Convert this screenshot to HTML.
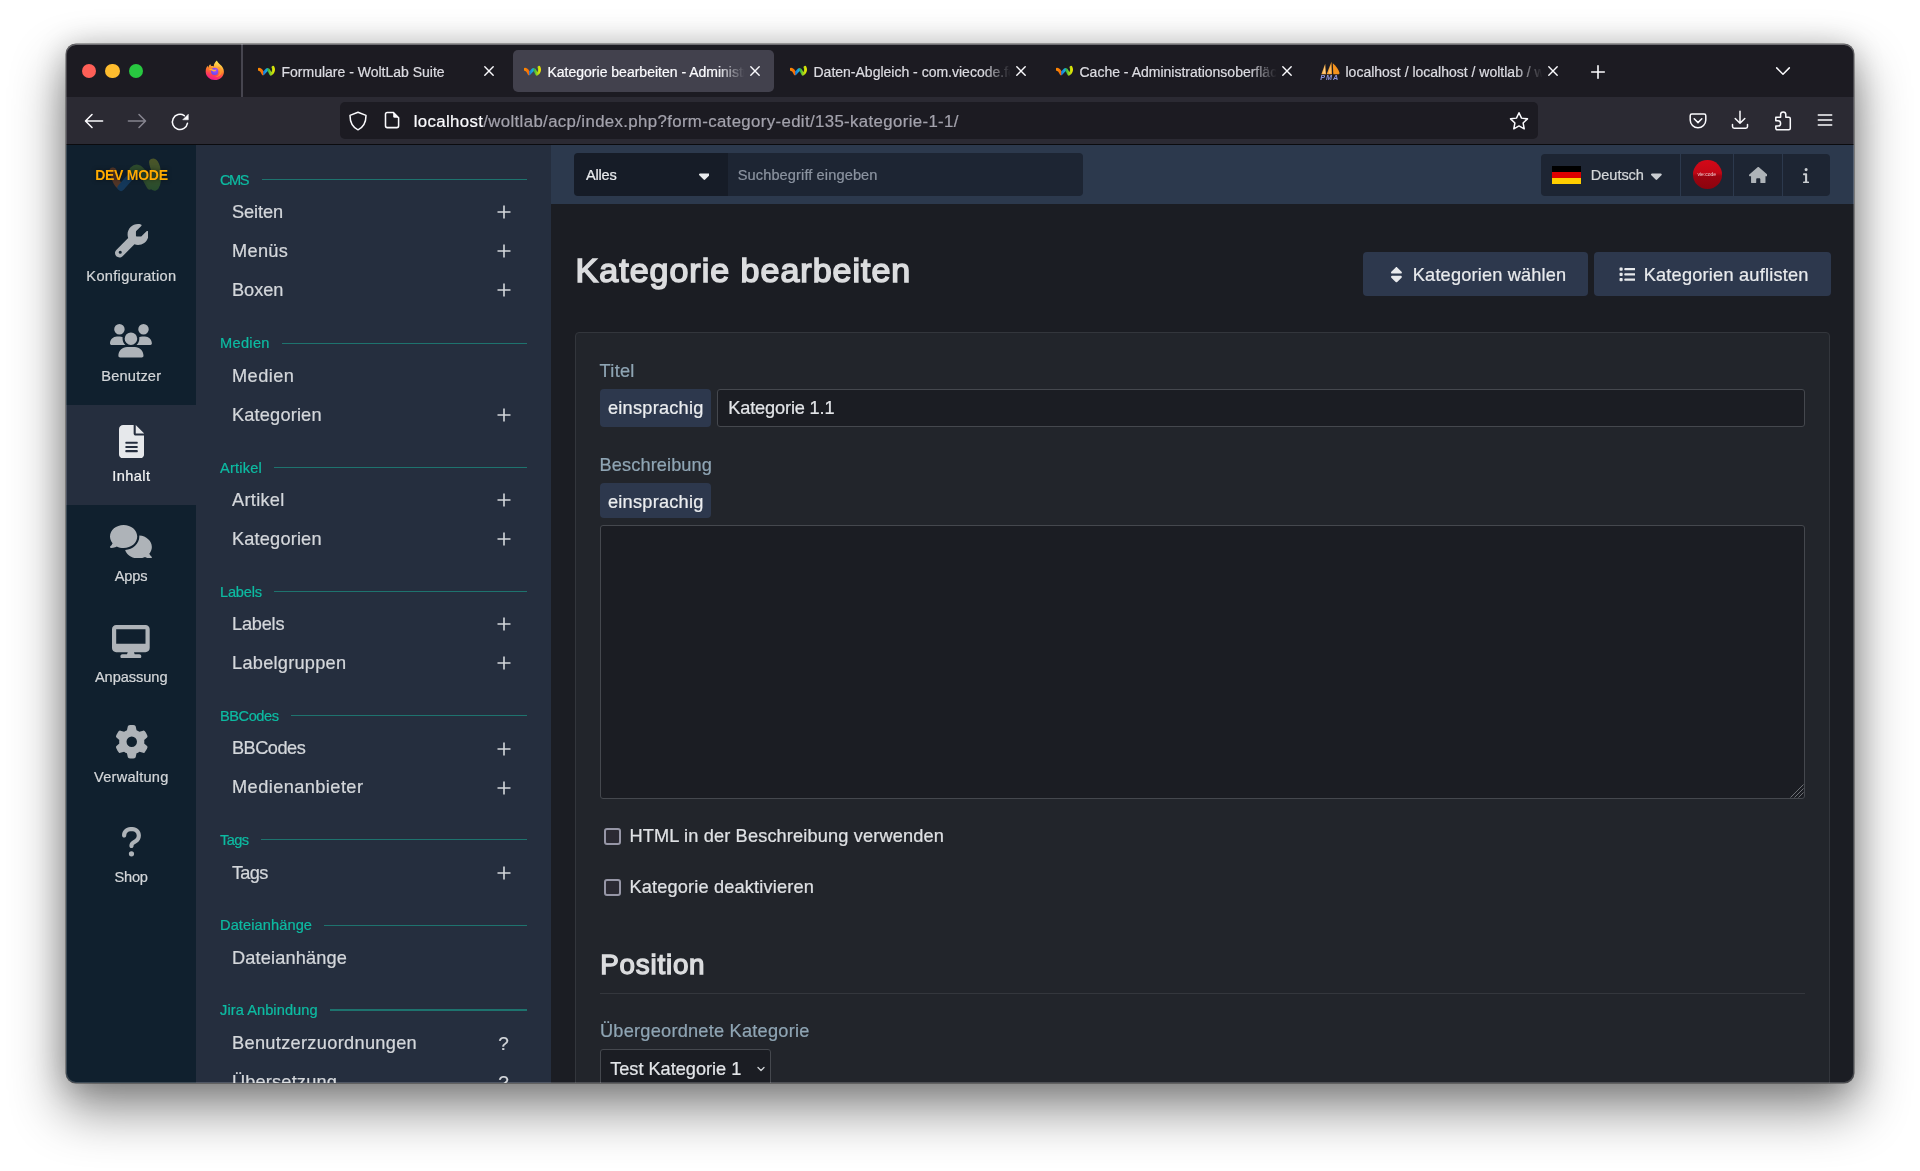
<!DOCTYPE html>
<html lang="de"><head><meta charset="utf-8"><title>Kategorie bearbeiten - Administrationsoberfläche</title>
<style>
html,body{margin:0;padding:0;background:#fff}
body{width:1920px;height:1171px;position:relative;overflow:hidden;font-family:"Liberation Sans",sans-serif}
.b{position:absolute;display:block}
.t{position:absolute;white-space:nowrap;font-family:"Liberation Sans",sans-serif;-webkit-text-stroke:0.22px}
#shadow{position:absolute;left:66px;top:44px;width:1788px;height:1039px;border-radius:10px;box-shadow:0 0 0 0.5px rgba(0,0,0,.6),0 25px 52px 3px rgba(0,0,0,.44),0 3px 30px rgba(0,0,0,.22)}
#win{position:absolute;left:66px;top:44px;width:1788px;height:1039px;border-radius:10px;overflow:hidden;background:#1c1b22}
#page{position:absolute;left:-66px;top:-44px;width:1920px;height:1171px;transform:translateZ(0);will-change:transform}
#rim{position:absolute;left:66px;top:44px;width:1788px;height:1039px;border-radius:10px;box-shadow:inset 0 0 0 1px rgba(255,255,255,.2),inset 0 1px 0 rgba(255,255,255,.22);pointer-events:none}
</style></head><body>
<div id="shadow"></div>
<div id="win"><div id="page">
<div class="b" style="left:66px;top:44px;width:1788px;height:53px;background:#1c1b22;"></div>
<div class="b" style="left:66px;top:97px;width:1788px;height:47px;background:#2b2a33;"></div>
<div class="b" style="left:66px;top:144px;width:1788px;height:1px;background:#0b0b0e;"></div>
<div class="b" style="left:81.5px;top:63.7px;width:14.6px;height:14.6px;background:#fe5f57;border-radius:7.3px;"></div>
<div class="b" style="left:105px;top:63.7px;width:14.6px;height:14.6px;background:#febc2e;border-radius:7.3px;"></div>
<div class="b" style="left:128.7px;top:63.7px;width:14.6px;height:14.6px;background:#28c840;border-radius:7.3px;"></div>
<div class="b" style="left:241.3px;top:44px;width:1.4px;height:53px;background:#46454f;"></div>
<svg class="b" style="left:205.4px;top:60.2px;" width="19.4" height="20.4" viewBox="0 0 20 21"><defs><linearGradient id="fx1" x1="0.65" y1="0" x2="0.35" y2="1"><stop offset="0" stop-color="#fff35a"/><stop offset="0.28" stop-color="#ffb83b"/><stop offset="0.52" stop-color="#ff7a2a"/><stop offset="0.74" stop-color="#ff3f55"/><stop offset="1" stop-color="#ee1690"/></linearGradient><radialGradient id="fx2" cx="0.6" cy="0.35" r="0.7"><stop offset="0" stop-color="#b04cff"/><stop offset="1" stop-color="#5b4bf0"/></radialGradient></defs>
<path d="M12.300 0.600C12.900 2.600 14.300 3.600 15.800 5C17.800 6.800 19.500 8.800 19.500 12C19.500 16.800 15.300 20.600 10.100 20.600C4.900 20.600 0.700 16.800 0.700 11.800C0.700 9.200 1.700 7.300 2.700 6C2.800 6.900 3.100 7.500 3.500 8C3.700 6 4.600 4.800 5.600 4.300C5.600 5.100 5.900 5.700 6.500 6.300C7.500 6.200 8.300 6.300 9 6.600C9 4.600 10.300 2.200 12.300 0.600Z" fill="url(#fx1)"/>
<circle cx="10" cy="11.800" r="3.700" fill="url(#fx2)"/>
<path d="M4 9.800C5.500 9.100 7.300 9.200 8.500 9.900C9.600 10.500 10.700 10.300 11.700 9.500C11.600 11 10.300 12 8.900 11.800C7.300 11.600 6.700 10.300 4 9.800Z" fill="#ffb23a"/>
<path d="M12.600 7.500C14.600 8.600 15.600 10.600 15.300 12.800C15 15.200 13 17 10.500 17.200C13.800 17.800 16.900 15.600 17.300 12.300C17.500 10.300 16.500 8.400 14.800 7.300C14 6.800 13.200 6.900 12.600 7.500Z" fill="#ff9a2e" opacity="0.9"/></svg>
<svg class="b" style="left:257.75px;top:65.4px;opacity:1;" width="17.5" height="11" viewBox="0 0 17.5 11"><defs><linearGradient id="wlt0" gradientUnits="userSpaceOnUse" x1="0.5" x2="16.5" y1="0" y2="0"><stop offset="0" stop-color="#ff8a00"/><stop offset="0.27" stop-color="#f36b0a"/><stop offset="0.32" stop-color="#1878d8"/><stop offset="0.50" stop-color="#19a8e0"/><stop offset="0.62" stop-color="#34b848"/><stop offset="0.78" stop-color="#9ad21a"/><stop offset="1" stop-color="#f2ea00"/></linearGradient></defs>
<path d="M1 4.300C3 4.600 4.200 6.500 5.200 8.800L8.800 4.800C9.600 4.100 10.300 4.500 10.800 5.400L12.900 9.200C14.800 8.600 16.300 5.200 15 2.300" fill="none" stroke="url(#wlt0)" stroke-width="2.900" stroke-linecap="round" stroke-linejoin="round"/></svg>
<div class="t" style="left:281.5px;top:61.95px;width:197.600px;overflow:hidden;font-size:14px;line-height:20px;color:#dcdce2;letter-spacing:0px">Formulare - WoltLab Suite</div>
<svg class="b" style="left:483.4px;top:64.8px;" width="12" height="12" viewBox="-6 -6 12 12"><path d="M-4.200 -4.200L4.200 4.200M4.200 -4.200L-4.200 4.200" stroke="#fbfbfe" stroke-width="1.400" stroke-linecap="round"/></svg>
<div class="b" style="left:513px;top:50px;width:261.2px;height:42px;background:#42414d;border-radius:5px;"></div>
<svg class="b" style="left:523.75px;top:65.4px;opacity:1;" width="17.5" height="11" viewBox="0 0 17.5 11"><defs><linearGradient id="wlt1" gradientUnits="userSpaceOnUse" x1="0.5" x2="16.5" y1="0" y2="0"><stop offset="0" stop-color="#ff8a00"/><stop offset="0.27" stop-color="#f36b0a"/><stop offset="0.32" stop-color="#1878d8"/><stop offset="0.50" stop-color="#19a8e0"/><stop offset="0.62" stop-color="#34b848"/><stop offset="0.78" stop-color="#9ad21a"/><stop offset="1" stop-color="#f2ea00"/></linearGradient></defs>
<path d="M1 4.300C3 4.600 4.200 6.500 5.200 8.800L8.800 4.800C9.600 4.100 10.300 4.500 10.800 5.400L12.900 9.200C14.800 8.600 16.300 5.200 15 2.300" fill="none" stroke="url(#wlt1)" stroke-width="2.900" stroke-linecap="round" stroke-linejoin="round"/></svg>
<div class="t" style="left:547.5px;top:61.95px;width:197.600px;overflow:hidden;font-size:14px;line-height:20px;color:#fbfbfe;letter-spacing:0px">Kategorie bearbeiten - Administrationsoberfläche</div>
<div class="b" style="left:717px;top:60px;width:30px;height:22px;background:linear-gradient(90deg,rgba(66,65,77,0),rgba(66,65,77,1) 92%)"></div>
<svg class="b" style="left:749.4px;top:64.8px;" width="12" height="12" viewBox="-6 -6 12 12"><path d="M-4.200 -4.200L4.200 4.200M4.200 -4.200L-4.200 4.200" stroke="#fbfbfe" stroke-width="1.400" stroke-linecap="round"/></svg>
<svg class="b" style="left:789.75px;top:65.4px;opacity:1;" width="17.5" height="11" viewBox="0 0 17.5 11"><defs><linearGradient id="wlt2" gradientUnits="userSpaceOnUse" x1="0.5" x2="16.5" y1="0" y2="0"><stop offset="0" stop-color="#ff8a00"/><stop offset="0.27" stop-color="#f36b0a"/><stop offset="0.32" stop-color="#1878d8"/><stop offset="0.50" stop-color="#19a8e0"/><stop offset="0.62" stop-color="#34b848"/><stop offset="0.78" stop-color="#9ad21a"/><stop offset="1" stop-color="#f2ea00"/></linearGradient></defs>
<path d="M1 4.300C3 4.600 4.200 6.500 5.200 8.800L8.800 4.800C9.600 4.100 10.300 4.500 10.800 5.400L12.900 9.200C14.800 8.600 16.300 5.200 15 2.300" fill="none" stroke="url(#wlt2)" stroke-width="2.900" stroke-linecap="round" stroke-linejoin="round"/></svg>
<div class="t" style="left:813.5px;top:61.95px;width:197.600px;overflow:hidden;font-size:14px;line-height:20px;color:#dcdce2;letter-spacing:0px">Daten-Abgleich - com.viecode.forum</div>
<div class="b" style="left:983px;top:60px;width:30px;height:22px;background:linear-gradient(90deg,rgba(28,27,34,0),rgba(28,27,34,1) 92%)"></div>
<svg class="b" style="left:1015.4px;top:64.8px;" width="12" height="12" viewBox="-6 -6 12 12"><path d="M-4.200 -4.200L4.200 4.200M4.200 -4.200L-4.200 4.200" stroke="#fbfbfe" stroke-width="1.400" stroke-linecap="round"/></svg>
<svg class="b" style="left:1055.75px;top:65.4px;opacity:1;" width="17.5" height="11" viewBox="0 0 17.5 11"><defs><linearGradient id="wlt3" gradientUnits="userSpaceOnUse" x1="0.5" x2="16.5" y1="0" y2="0"><stop offset="0" stop-color="#ff8a00"/><stop offset="0.27" stop-color="#f36b0a"/><stop offset="0.32" stop-color="#1878d8"/><stop offset="0.50" stop-color="#19a8e0"/><stop offset="0.62" stop-color="#34b848"/><stop offset="0.78" stop-color="#9ad21a"/><stop offset="1" stop-color="#f2ea00"/></linearGradient></defs>
<path d="M1 4.300C3 4.600 4.200 6.500 5.200 8.800L8.800 4.800C9.600 4.100 10.300 4.500 10.800 5.400L12.900 9.200C14.800 8.600 16.300 5.200 15 2.300" fill="none" stroke="url(#wlt3)" stroke-width="2.900" stroke-linecap="round" stroke-linejoin="round"/></svg>
<div class="t" style="left:1079.5px;top:61.95px;width:197.600px;overflow:hidden;font-size:14px;line-height:20px;color:#dcdce2;letter-spacing:0px">Cache - Administrationsoberfläche</div>
<div class="b" style="left:1249px;top:60px;width:30px;height:22px;background:linear-gradient(90deg,rgba(28,27,34,0),rgba(28,27,34,1) 92%)"></div>
<svg class="b" style="left:1281.4px;top:64.8px;" width="12" height="12" viewBox="-6 -6 12 12"><path d="M-4.200 -4.200L4.200 4.200M4.200 -4.200L-4.200 4.200" stroke="#fbfbfe" stroke-width="1.400" stroke-linecap="round"/></svg>
<svg class="b" style="left:1318px;top:60px" width="24" height="22" viewBox="1318 60 24 22"><path d="M1325.200 63.800L1326 74.300H1321.400Z" fill="#f9b14a"/><path d="M1331.500 61.800L1332 74.300H1326.600Z" fill="#f7a02c"/><path d="M1332.800 63.200C1336.300 66 1338.600 69.500 1339.600 73L1339 74.300H1333.300Z" fill="#f5921c"/><path d="M1324.800 66L1325.200 73.500H1323Z" fill="#fde0ae" opacity="0.6"/><path d="M1330.600 65L1331 73.500H1328.500Z" fill="#fde0ae" opacity="0.5"/></svg>
<div class="t" style="left:1320.300px;top:73.600px;font-size:7.200px;line-height:7px;color:#8f96dc;font-weight:bold;font-style:italic;letter-spacing:0.900px;-webkit-text-stroke:0">PMA</div>
<div class="t" style="left:1345.5px;top:61.95px;width:197.600px;overflow:hidden;font-size:14px;line-height:20px;color:#dcdce2;letter-spacing:0px">localhost / localhost / woltlab / wcf1_category | phpMyAdmin</div>
<div class="b" style="left:1515px;top:60px;width:30px;height:22px;background:linear-gradient(90deg,rgba(28,27,34,0),rgba(28,27,34,1) 92%)"></div>
<svg class="b" style="left:1547.4px;top:64.8px;" width="12" height="12" viewBox="-6 -6 12 12"><path d="M-4.200 -4.200L4.200 4.200M4.200 -4.200L-4.200 4.200" stroke="#fbfbfe" stroke-width="1.400" stroke-linecap="round"/></svg>
<svg class="b" style="left:1590px;top:63.5px;" width="16" height="16" viewBox="-8 -8 16 16"><path d="M-6.300 0H6.300M0 -6.300V6.300" stroke="#fbfbfe" stroke-width="1.600" stroke-linecap="round"/></svg>
<svg class="b" style="left:1773.8px;top:64.5px;" width="18" height="12" viewBox="-9 -6 18 12"><path d="M-6.300 -3.100L0 3.200L6.300 -3.100" fill="none" stroke="#fbfbfe" stroke-width="1.500" stroke-linecap="round" stroke-linejoin="round"/></svg>
<svg class="b" style="left:83.3px;top:112px;" width="22" height="18" viewBox="-11 -9 22 18"><path d="M8.600 0H-8.200M-2 -6.500L-8.500 0L-2 6.500" fill="none" stroke="#fbfbfe" stroke-width="1.550" stroke-linecap="round" stroke-linejoin="round"/></svg>
<svg class="b" style="left:126.4px;top:112px;" width="22" height="18" viewBox="-11 -9 22 18"><path d="M-8.600 0H8.200M2 -6.500L8.500 0L2 6.500" fill="none" stroke="#85848f" stroke-width="1.550" stroke-linecap="round" stroke-linejoin="round"/></svg>
<svg class="b" style="left:168.7px;top:110.5px;" width="22" height="22" viewBox="-11 -11 22 22"><path d="M7.500 1.200A7.600 7.600 0 1 1 4.300 -6.300" fill="none" stroke="#fbfbfe" stroke-width="1.550" stroke-linecap="round"/><path d="M8.300 -7.800V-2.200H2.700z" fill="#fbfbfe" stroke="#fbfbfe" stroke-width="0.500" stroke-linejoin="round"/></svg>
<div class="b" style="left:339.7px;top:101.7px;width:1198.3px;height:37.5px;background:#1c1b22;border-radius:5px;"></div>
<svg class="b" style="left:347.2px;top:109.5px;" width="22" height="22" viewBox="-11 -11 22 22"><path d="M0 -8.800L8 -5.600C8 1.500 5 6.300 0 8.800C-5 6.300 -8 1.500 -8 -5.600Z" fill="none" stroke="#fbfbfe" stroke-width="1.500" stroke-linejoin="round"/></svg>
<svg class="b" style="left:381.5px;top:110.4px;" width="20" height="20" viewBox="-10 -10 20 20"><path d="M-4.700 -7.600H1.200L6.600 -2.200V5.800A1.800 1.800 0 0 1 4.800 7.600H-4.700A1.800 1.800 0 0 1 -6.500 5.800V-5.800A1.800 1.800 0 0 1 -4.700 -7.600Z" fill="none" stroke="#fbfbfe" stroke-width="1.550" stroke-linejoin="round"/><path d="M1.200 -7.600V-3.700A1.500 1.500 0 0 0 2.700 -2.200H6.600Z" fill="#fbfbfe"/></svg>
<div class="t" style="left:413.7px;top:110.98px;font-size:16.8px;line-height:22px;color:#a3a2ac;letter-spacing:0.37px"><span style="color:#fbfbfe">localhost</span>/woltlab/acp/index.php?form-category-edit/135-kategorie-1-1/</div>
<svg class="b" style="left:1508px;top:109.6px;" width="22" height="22" viewBox="-11 -11 22 22"><path d="M0.00 -8.30L2.53 -2.88L8.46 -2.15L4.09 1.93L5.23 7.80L0.00 4.90L-5.23 7.80L-4.09 1.93L-8.46 -2.15L-2.53 -2.88Z" fill="none" stroke="#fbfbfe" stroke-width="1.500" stroke-linejoin="round"/></svg>
<svg class="b" style="left:1686.6px;top:111px;" width="22" height="20" viewBox="-11 -10 22 20"><path d="M-6.100 -7H6.100A1.700 1.700 0 0 1 7.800 -5.300V-1.100A7.800 7.800 0 0 1 -7.800 -1.100V-5.300A1.700 1.700 0 0 1 -6.100 -7Z" fill="none" stroke="#fbfbfe" stroke-width="1.500" stroke-linejoin="round"/><path d="M-3.800 -2.200L0 1.600L3.800 -2.200" fill="none" stroke="#fbfbfe" stroke-width="1.500" stroke-linecap="round" stroke-linejoin="round"/></svg>
<svg class="b" style="left:1728.8px;top:109.2px;" width="22" height="22" viewBox="-11 -11 22 22"><path d="M0 -8.800V3.300M-4.800 -1.500L0 3.300L4.800 -1.500" fill="none" stroke="#fbfbfe" stroke-width="1.500" stroke-linecap="round" stroke-linejoin="round"/><path d="M-7.500 4.500V6.600A1.700 1.700 0 0 0 -5.800 8.300H5.800A1.700 1.700 0 0 0 7.500 6.600V4.500" fill="none" stroke="#fbfbfe" stroke-width="1.500" stroke-linecap="round"/></svg>
<svg class="b" style="left:1772.3px;top:109.6px;" width="22" height="22" viewBox="-11 -11 22 22"><path d="M-7.200 -3.800H-2.400V-6.400A2.600 2.600 0 0 1 2.800 -6.400V-3.800H5.800A1.500 1.500 0 0 1 7.300 -2.300V7.300A1.500 1.500 0 0 1 5.800 8.800H-5.700A1.500 1.500 0 0 1 -7.200 7.300V5H-5A2.600 2.600 0 0 0 -5 -0.200H-7.200Z" fill="none" stroke="#fbfbfe" stroke-width="1.500" stroke-linejoin="round"/></svg>
<svg class="b" style="left:1815.3px;top:112.3px;" width="20" height="16" viewBox="-10 -8 20 16"><path d="M-6.700 -5.100H6.700M-6.700 0H6.700M-6.700 5.100H6.700" stroke="#fbfbfe" stroke-width="1.500" stroke-linecap="round"/></svg>
<div class="b" style="left:66px;top:145px;width:130px;height:938px;background:#10202e;"></div>
<div class="b" style="left:196px;top:145px;width:355px;height:938px;background:#252e3e;"></div>
<div class="b" style="left:551px;top:145px;width:1303px;height:938px;background:#1b1d23;"></div>
<div class="b" style="left:551px;top:145px;width:1303px;height:59.3px;background:#2c394d;"></div>
<svg class="b" style="left:100px;top:150px;opacity:0.36" width="70" height="50" viewBox="100 150 70 50"><defs><linearGradient id="lg1" x1="0" y1="0" x2="0" y2="1"><stop offset="0" stop-color="#b5b520"/><stop offset="1" stop-color="#4f9a2e"/></linearGradient></defs><path d="M113 171Q116.500 186.500 121.500 186" fill="none" stroke="#c45a1c" stroke-width="7" stroke-linecap="round"/><path d="M121 187.500L136.500 170" fill="none" stroke="#1c63a8" stroke-width="7" stroke-linecap="round"/><path d="M133 170Q138 165 143 173L150 186" fill="none" stroke="#5e922a" stroke-width="7" stroke-linecap="round"/><path d="M146 181Q150 192 156 190.500Q161.500 188 161 175Q160.500 160 153.500 158.500Q147.500 158.500 149.500 165Q152 171 152 178Z" fill="url(#lg1)"/></svg>
<div class="t" style="left:95.2px;top:166.25px;font-size:14px;line-height:18px;color:#ffab00;letter-spacing:-0.27px;font-weight:bold;-webkit-text-stroke:0;text-shadow:0 0 4px rgba(0,0,0,.55);">DEV MODE</div>
<svg class="b" style="left:114.55px;top:224.15px;" width="33.5" height="33.5" viewBox="0 0 512 512"><path fill="#aeb3b8" d="M352 320c88.400 0 160-71.600 160-160c0-15.300-2.200-30.100-6.200-44.200c-3.100-10.800-16.400-13.200-24.300-5.300l-76.800 76.800c-3 3-7.100 4.700-11.300 4.700H336c-8.800 0-16-7.200-16-16V118.600c0-4.200 1.700-8.300 4.700-11.300l76.800-76.800c7.900-7.900 5.400-21.200-5.300-24.300C382.100 2.200 367.300 0 352 0C263.600 0 192 71.600 192 160c0 19.100 3.400 37.500 9.500 54.500L19.900 396.100C7.200 408.800 0 426.100 0 444.100C0 481.600 30.400 512 67.900 512c18 0 35.300-7.200 48-19.900L297.500 310.500c17 6.200 35.400 9.500 54.500 9.500zM80 408a24 24 0 1 1 0 48 24 24 0 1 1 0-48z"/></svg>
<div class="t" style="left:86.35px;top:266.84px;font-size:14.6px;line-height:19px;color:#d3d6d9;letter-spacing:0.31px;">Konfiguration</div>
<svg class="b" style="left:110.36px;top:324.35px;" width="41.88" height="33.5" viewBox="0 0 640 512"><path fill="#aeb3b8" d="M144 0a80 80 0 1 1 0 160A80 80 0 1 1 144 0zM512 0a80 80 0 1 1 0 160A80 80 0 1 1 512 0zM0 298.700C0 239.800 47.800 192 106.700 192h42.700c15.900 0 31 3.500 44.600 9.700c-1.300 7.200-1.900 14.700-1.900 22.300c0 38.200 16.800 72.500 43.300 96c-.2 0-.4 0-.7 0H21.300C9.600 320 0 310.400 0 298.700zM405.300 320c-.2 0-.4 0-.7 0c26.600-23.500 43.300-57.800 43.300-96c0-7.600-.7-15-1.900-22.300c13.600-6.300 28.700-9.700 44.600-9.700h42.700C592.200 192 640 239.800 640 298.700c0 11.800-9.600 21.300-21.300 21.300H405.300zM224 224a96 96 0 1 1 192 0 96 96 0 1 1 -192 0zM128 485.300C128 411.700 187.700 352 261.300 352H378.700C452.300 352 512 411.700 512 485.300c0 14.700-11.900 26.700-26.700 26.700H154.700c-14.700 0-26.700-11.900-26.700-26.700z"/></svg>
<div class="t" style="left:101.36px;top:367.04px;font-size:14.6px;line-height:19px;color:#d3d6d9;letter-spacing:0.18px;">Benutzer</div>
<div class="b" style="left:66px;top:405px;width:130px;height:100.3px;background:#252e3e;"></div>
<svg class="b" style="left:118.74px;top:424.55px;" width="25.12" height="33.5" viewBox="0 0 384 512"><path fill="#e6e8eb" d="M64 0C28.700 0 0 28.700 0 64V448c0 35.300 28.700 64 64 64H320c35.300 0 64-28.700 64-64V160H256c-17.700 0-32-14.300-32-32V0H64zM256 0V128H384L256 0zM112 256H272c8.800 0 16 7.200 16 16s-7.200 16-16 16H112c-8.800 0-16-7.200-16-16s7.200-16 16-16zm0 64H272c8.800 0 16 7.200 16 16s-7.200 16-16 16H112c-8.800 0-16-7.200-16-16s7.200-16 16-16zm0 64H272c8.800 0 16 7.200 16 16s-7.200 16-16 16H112c-8.800 0-16-7.200-16-16s7.200-16 16-16z"/></svg>
<div class="t" style="left:112.36px;top:467.24px;font-size:14.6px;line-height:19px;color:#f2f3f4;letter-spacing:0.39px;">Inhalt</div>
<svg class="b" style="left:110.36px;top:524.75px;" width="41.88" height="33.5" viewBox="0 0 640 512"><path fill="#aeb3b8" d="M208 352c114.900 0 208-78.800 208-176S322.900 0 208 0S0 78.800 0 176c0 38.600 14.700 74.300 39.600 103.400c-3.500 9.400-8.700 17.700-14.200 24.700c-4.800 6.200-9.700 11-13.300 14.300c-1.800 1.600-3.300 2.900-4.300 3.700c-.5 .4-.9 .7-1.100 .8l-.2 .2C1 327.200-1.400 334.400 .8 340.900S9.100 352 16 352c21.800 0 43.800-5.600 62.100-12.500c9.200-3.500 17.800-7.400 25.300-11.400C134.100 343.300 169.800 352 208 352zM448 176c0 112.300-99.100 196.900-216.500 207C255.800 457.400 336.400 512 432 512c38.200 0 73.900-8.700 104.700-23.900c7.500 4 16 7.900 25.200 11.400c18.300 6.900 40.300 12.500 62.100 12.500c6.900 0 13.100-4.500 15.200-11.100c2.100-6.600-.2-13.800-5.800-17.900l-.2-.2c-.2-.2-.6-.4-1.100-.8c-1-.8-2.500-2-4.300-3.700c-3.600-3.300-8.500-8.100-13.300-14.300c-5.500-7-10.700-15.400-14.200-24.700c24.900-29 39.600-64.700 39.600-103.400c0-92.800-84.900-168.900-192.600-175.500c.4 5.100 .6 10.300 .6 15.500z"/></svg>
<div class="t" style="left:114.71px;top:567.44px;font-size:14.6px;line-height:19px;color:#d3d6d9;letter-spacing:-0.1px;">Apps</div>
<svg class="b" style="left:112.46px;top:624.95px;" width="37.69" height="33.5" viewBox="0 0 576 512"><path fill="#aeb3b8" d="M64 0C28.700 0 0 28.700 0 64V352c0 35.300 28.700 64 64 64H240l-10.700 32H160c-17.700 0-32 14.300-32 32s14.300 32 32 32H416c17.700 0 32-14.300 32-32s-14.300-32-32-32H346.700L336 416H512c35.300 0 64-28.700 64-64V64c0-35.300-28.700-64-64-64H64zM512 64V288H64V64H512z"/></svg>
<div class="t" style="left:94.88px;top:667.64px;font-size:14.6px;line-height:19px;color:#d3d6d9;letter-spacing:-0.05px;">Anpassung</div>
<svg class="b" style="left:114.55px;top:725.15px;" width="33.5" height="33.5" viewBox="0 0 512 512"><path fill="#aeb3b8" d="M495.900 166.600c3.200 8.700 .5 18.400-6.400 24.600l-43.300 39.400c1.100 8.300 1.700 16.800 1.700 25.400s-.6 17.100-1.700 25.400l43.300 39.400c6.900 6.200 9.600 15.900 6.400 24.600c-4.400 11.900-9.700 23.300-15.800 34.300l-4.700 8.100c-6.600 11-14 21.400-22.100 31.200c-5.900 7.200-15.700 9.600-24.500 6.800l-55.700-17.700c-13.400 10.300-28.200 18.900-44 25.400l-12.500 57.100c-2 9.100-9 16.300-18.200 17.800c-13.800 2.300-28 3.500-42.500 3.500s-28.700-1.200-42.500-3.500c-9.200-1.500-16.200-8.700-18.200-17.800l-12.500-57.100c-15.800-6.500-30.600-15.100-44-25.400L83.100 425.900c-8.800 2.800-18.600 .3-24.500-6.800c-8.100-9.800-15.500-20.200-22.100-31.200l-4.700-8.100c-6.100-11-11.400-22.400-15.800-34.300c-3.200-8.700-.5-18.400 6.400-24.600l43.300-39.400C64.600 273.100 64 264.600 64 256s.6-17.100 1.700-25.400L22.400 191.200c-6.900-6.200-9.600-15.900-6.400-24.600c4.400-11.900 9.700-23.300 15.800-34.300l4.700-8.100c6.600-11 14-21.400 22.100-31.200c5.900-7.200 15.700-9.600 24.500-6.800l55.700 17.700c13.400-10.300 28.200-18.900 44-25.400l12.500-57.100c2-9.100 9-16.300 18.200-17.800C227.300 1.200 241.500 0 256 0s28.700 1.200 42.500 3.500c9.200 1.500 16.200 8.700 18.200 17.800l12.500 57.100c15.800 6.500 30.600 15.100 44 25.400l55.700-17.700c8.800-2.800 18.600-.3 24.500 6.800c8.100 9.800 15.500 20.200 22.100 31.200l4.700 8.100c6.100 11 11.400 22.400 15.800 34.300zM256 336a80 80 0 1 0 0-160 80 80 0 1 0 0 160z"/></svg>
<div class="t" style="left:94.06px;top:767.84px;font-size:14.6px;line-height:19px;color:#d3d6d9;letter-spacing:0.23px;">Verwaltung</div>
<svg class="b" style="left:120.83px;top:825.35px;" width="20.94" height="33.5" viewBox="0 0 320 512"><path fill="#aeb3b8" d="M80 160c0-35.300 28.700-64 64-64h32c35.300 0 64 28.700 64 64v3.600c0 21.800-11.100 42.100-29.400 53.800l-42.200 27.100c-25.200 16.200-40.400 44.100-40.400 74V320c0 17.700 14.300 32 32 32s32-14.300 32-32v-1.400c0-8.200 4.200-15.800 11-20.200l42.200-27.100c36.600-23.600 58.800-64.100 58.800-107.700V160c0-70.700-57.300-128-128-128H144C73.300 32 16 89.300 16 160c0 17.700 14.300 32 32 32s32-14.300 32-32zm80 320a40 40 0 1 0 0-80 40 40 0 1 0 0 80z"/></svg>
<div class="t" style="left:114.4px;top:868.04px;font-size:14.6px;line-height:19px;color:#d3d6d9;letter-spacing:-0.17px;">Shop</div>
<div class="t" style="left:220px;top:170.64px;font-size:14.6px;line-height:19px;color:#0dbba2;letter-spacing:-1.51px;">CMS</div>
<div class="b" style="left:261.71px;top:178.7px;width:265.59px;height:1.2px;background:rgba(23,184,158,0.5);"></div>
<div class="t" style="left:232px;top:200.09px;font-size:18.2px;line-height:24px;color:#d4d7db;letter-spacing:-0.11px;">Seiten</div>
<svg class="b" style="left:496.6px;top:205.3px;" width="14" height="14" viewBox="-7 -7 14 14"><path d="M-6.500 0H6.500M0 -6.500V6.500" stroke="#d4d7db" stroke-width="1.600"/></svg>
<div class="t" style="left:232px;top:239.09px;font-size:18.2px;line-height:24px;color:#d4d7db;letter-spacing:0.32px;">Menüs</div>
<svg class="b" style="left:496.6px;top:244.3px;" width="14" height="14" viewBox="-7 -7 14 14"><path d="M-6.500 0H6.500M0 -6.500V6.500" stroke="#d4d7db" stroke-width="1.600"/></svg>
<div class="t" style="left:232px;top:278.09px;font-size:18.2px;line-height:24px;color:#d4d7db;letter-spacing:-0.05px;">Boxen</div>
<svg class="b" style="left:496.6px;top:283.3px;" width="14" height="14" viewBox="-7 -7 14 14"><path d="M-6.500 0H6.500M0 -6.500V6.500" stroke="#d4d7db" stroke-width="1.600"/></svg>
<div class="t" style="left:220px;top:334.44px;font-size:14.6px;line-height:19px;color:#0dbba2;letter-spacing:0.32px;">Medien</div>
<div class="b" style="left:281.78px;top:342.5px;width:245.52px;height:1.2px;background:rgba(23,184,158,0.5);"></div>
<div class="t" style="left:232px;top:363.89px;font-size:18.2px;line-height:24px;color:#d4d7db;letter-spacing:0.43px;">Medien</div>
<div class="t" style="left:232px;top:402.89px;font-size:18.2px;line-height:24px;color:#d4d7db;letter-spacing:0.17px;">Kategorien</div>
<svg class="b" style="left:496.6px;top:408.1px;" width="14" height="14" viewBox="-7 -7 14 14"><path d="M-6.500 0H6.500M0 -6.500V6.500" stroke="#d4d7db" stroke-width="1.600"/></svg>
<div class="t" style="left:220px;top:458.64px;font-size:14.6px;line-height:19px;color:#0dbba2;letter-spacing:0.22px;">Artikel</div>
<div class="b" style="left:274.18px;top:466.7px;width:253.12px;height:1.2px;background:rgba(23,184,158,0.5);"></div>
<div class="t" style="left:232px;top:488.09px;font-size:18.2px;line-height:24px;color:#d4d7db;letter-spacing:0.3px;">Artikel</div>
<svg class="b" style="left:496.6px;top:493.3px;" width="14" height="14" viewBox="-7 -7 14 14"><path d="M-6.500 0H6.500M0 -6.500V6.500" stroke="#d4d7db" stroke-width="1.600"/></svg>
<div class="t" style="left:232px;top:527.09px;font-size:18.2px;line-height:24px;color:#d4d7db;letter-spacing:0.17px;">Kategorien</div>
<svg class="b" style="left:496.6px;top:532.3px;" width="14" height="14" viewBox="-7 -7 14 14"><path d="M-6.500 0H6.500M0 -6.500V6.500" stroke="#d4d7db" stroke-width="1.600"/></svg>
<div class="t" style="left:220px;top:582.64px;font-size:14.6px;line-height:19px;color:#0dbba2;letter-spacing:-0.19px;">Labels</div>
<div class="b" style="left:274.36px;top:590.7px;width:252.94px;height:1.2px;background:rgba(23,184,158,0.5);"></div>
<div class="t" style="left:232px;top:612.09px;font-size:18.2px;line-height:24px;color:#d4d7db;letter-spacing:-0.21px;">Labels</div>
<svg class="b" style="left:496.6px;top:617.3px;" width="14" height="14" viewBox="-7 -7 14 14"><path d="M-6.500 0H6.500M0 -6.500V6.500" stroke="#d4d7db" stroke-width="1.600"/></svg>
<div class="t" style="left:232px;top:651.09px;font-size:18.2px;line-height:24px;color:#d4d7db;letter-spacing:0.26px;">Labelgruppen</div>
<svg class="b" style="left:496.6px;top:656.3px;" width="14" height="14" viewBox="-7 -7 14 14"><path d="M-6.500 0H6.500M0 -6.500V6.500" stroke="#d4d7db" stroke-width="1.600"/></svg>
<div class="t" style="left:220px;top:707.04px;font-size:14.6px;line-height:19px;color:#0dbba2;letter-spacing:-0.44px;">BBCodes</div>
<div class="b" style="left:291.35px;top:715.1px;width:235.95px;height:1.2px;background:rgba(23,184,158,0.5);"></div>
<div class="t" style="left:232px;top:736.49px;font-size:18.2px;line-height:24px;color:#d4d7db;letter-spacing:-0.51px;">BBCodes</div>
<svg class="b" style="left:496.6px;top:741.7px;" width="14" height="14" viewBox="-7 -7 14 14"><path d="M-6.500 0H6.500M0 -6.500V6.500" stroke="#d4d7db" stroke-width="1.600"/></svg>
<div class="t" style="left:232px;top:775.49px;font-size:18.2px;line-height:24px;color:#d4d7db;letter-spacing:0.43px;">Medienanbieter</div>
<svg class="b" style="left:496.6px;top:780.7px;" width="14" height="14" viewBox="-7 -7 14 14"><path d="M-6.500 0H6.500M0 -6.500V6.500" stroke="#d4d7db" stroke-width="1.600"/></svg>
<div class="t" style="left:220px;top:831.24px;font-size:14.6px;line-height:19px;color:#0dbba2;letter-spacing:-0.61px;">Tags</div>
<div class="b" style="left:261.3px;top:839.3px;width:266px;height:1.2px;background:rgba(23,184,158,0.5);"></div>
<div class="t" style="left:232px;top:860.69px;font-size:18.2px;line-height:24px;color:#d4d7db;letter-spacing:-0.73px;">Tags</div>
<svg class="b" style="left:496.6px;top:865.9px;" width="14" height="14" viewBox="-7 -7 14 14"><path d="M-6.500 0H6.500M0 -6.500V6.500" stroke="#d4d7db" stroke-width="1.600"/></svg>
<div class="t" style="left:220px;top:916.44px;font-size:14.6px;line-height:19px;color:#0dbba2;letter-spacing:0.1px;">Dateianhänge</div>
<div class="b" style="left:324.29px;top:924.5px;width:203.01px;height:1.2px;background:rgba(23,184,158,0.5);"></div>
<div class="t" style="left:232px;top:945.89px;font-size:18.2px;line-height:24px;color:#d4d7db;letter-spacing:0.15px;">Dateianhänge</div>
<div class="t" style="left:220px;top:1001.34px;font-size:14.6px;line-height:19px;color:#0dbba2;letter-spacing:0.08px;">Jira Anbindung</div>
<div class="b" style="left:329.97px;top:1009.4px;width:197.33px;height:1.2px;background:rgba(23,184,158,0.5);"></div>
<div class="t" style="left:232px;top:1030.79px;font-size:18.2px;line-height:24px;color:#d4d7db;letter-spacing:0.32px;">Benutzerzuordnungen</div>
<div class="t" style="left:498.32px;top:1030.72px;font-size:19px;line-height:25px;color:#d4d7db;">?</div>
<div class="t" style="left:232px;top:1069.79px;font-size:18.2px;line-height:24px;color:#d4d7db;letter-spacing:0.17px;">Übersetzung</div>
<div class="t" style="left:498.32px;top:1069.72px;font-size:19px;line-height:25px;color:#d4d7db;">?</div>
<div class="b" style="left:574.4px;top:153.4px;width:153.6px;height:42.6px;background:#161c27;border-radius:4px 0 0 4px;"></div>
<div class="b" style="left:728px;top:153.4px;width:355px;height:42.6px;background:#1d2533;border-radius:0 4px 4px 0;"></div>
<div class="t" style="left:586px;top:165.94px;font-size:14.6px;line-height:19px;color:#e8eaed;letter-spacing:-0.23px;">Alles</div>
<svg class="b" style="left:698.62px;top:167px;" width="10.75" height="17.2" viewBox="0 0 320 512"><path fill="#e8eaed" d="M137.400 374.600c12.500 12.500 32.800 12.500 45.300 0l128-128c9.200-9.200 11.900-22.900 6.900-34.900s-16.600-19.800-29.600-19.800L32 192c-12.900 0-24.600 7.800-29.600 19.800s-2.200 25.700 6.900 34.900l128 128z"/></svg>
<div class="t" style="left:737.7px;top:165.94px;font-size:14.6px;line-height:19px;color:#8b93a0;letter-spacing:0.11px;">Suchbegriff eingeben</div>
<div class="b" style="left:1540.7px;top:153.6px;width:289.3px;height:42.2px;background:#1d2533;border-radius:4px;"></div>
<div class="b" style="left:1679.9px;top:153.6px;width:1.2px;height:42.2px;background:#2c394d;"></div>
<div class="b" style="left:1733.1px;top:153.6px;width:1.2px;height:42.2px;background:#2c394d;"></div>
<div class="b" style="left:1781.9px;top:153.6px;width:1.2px;height:42.2px;background:#2c394d;"></div>
<div class="b" style="left:1551.9px;top:165.9px;width:29.2px;height:6.05px;background:#000;"></div>
<div class="b" style="left:1551.9px;top:171.95px;width:29.2px;height:6.05px;background:#dd0000;"></div>
<div class="b" style="left:1551.9px;top:178px;width:29.2px;height:6px;background:#ffce00;"></div>
<div class="t" style="left:1590.8px;top:166.14px;font-size:14.6px;line-height:19px;color:#d3d6d9;letter-spacing:-0.06px;">Deutsch</div>
<svg class="b" style="left:1651.03px;top:167.2px;" width="10.75" height="17.2" viewBox="0 0 320 512"><path fill="#c9cdd1" d="M137.400 374.600c12.500 12.500 32.800 12.500 45.300 0l128-128c9.200-9.200 11.900-22.900 6.900-34.900s-16.600-19.800-29.600-19.800L32 192c-12.900 0-24.600 7.800-29.600 19.800s-2.200 25.700 6.900 34.900l128 128z"/></svg>
<div class="b" style="left:1692.900px;top:160.400px;width:28.700px;height:28.700px;border-radius:50%;background:linear-gradient(180deg,#d40818 0%,#c30715 45%,#9c0410 55%,#8c030e 100%)"></div>
<div class="t" style="left:1697.500px;top:170.500px;font-size:5px;line-height:6px;color:#f0cfd2;-webkit-text-stroke:0;letter-spacing:0">vie:code</div>
<svg class="b" style="left:1748.52px;top:166.75px;" width="18.56" height="16.5" viewBox="0 0 576 512"><path fill="#aeb3b8" d="M575.800 255.500c0 18-15 32.100-32 32.100h-32l.7 160.200c0 2.700-.2 5.400-.5 8.100V472c0 22.100-17.900 40-40 40H456c-1.100 0-2.200 0-3.300-.1c-1.400 .1-2.800 .1-4.200 .1H416 392c-22.100 0-40-17.900-40-40V448 384c0-17.700-14.300-32-32-32H256c-17.700 0-32 14.300-32 32v64 24c0 22.100-17.900 40-40 40H160 128.100c-1.500 0-3-.1-4.500-.2c-1.200 .1-2.400 .2-3.600 .2H104c-22.100 0-40-17.900-40-40V360c0-.9 0-1.900 .1-2.800V287.600H32c-18 0-32-14-32-32.100c0-9 3-17 10-24L266.400 8c7-7 15-8 22-8s15 2 21 7L564.800 231.500c8 7 12 15 11 24z"/></svg>
<svg class="b" style="left:1803.19px;top:166.9px;" width="6.23" height="16.6" viewBox="0 0 192 512"><path fill="#c9cdd1" d="M48 80a48 48 0 1 1 96 0A48 48 0 1 1 48 80zM0 224c0-17.700 14.300-32 32-32H96c17.700 0 32 14.300 32 32V448h32c17.700 0 32 14.300 32 32s-14.300 32-32 32H32c-17.700 0-32-14.300-32-32s14.300-32 32-32H64V256H32c-17.700 0-32-14.300-32-32z"/></svg>
<div class="t" style="left:575.6px;top:248.42px;font-size:34px;line-height:44px;color:#dcdddf;letter-spacing:1px;-webkit-text-stroke:1.600px;">Kategorie bearbeiten</div>
<div class="b" style="left:1363.4px;top:252px;width:224.6px;height:44.4px;background:#2d384d;border-radius:4px;"></div>
<div class="b" style="left:1594px;top:252px;width:236.6px;height:44.4px;background:#2d384d;border-radius:4px;"></div>
<svg class="b" style="left:1390.66px;top:266.1px;" width="10.88" height="17.4" viewBox="0 0 320 512"><path fill="#e8eaed" d="M137.400 41.400c12.500-12.500 32.800-12.500 45.300 0l128 128c9.200 9.200 11.900 22.900 6.900 34.900s-16.600 19.800-29.600 19.800H32c-12.900 0-24.600-7.800-29.600-19.800s-2.200-25.700 6.900-34.900l128-128zm0 429.300l-128-128c-9.200-9.200-11.900-22.900-6.900-34.900s16.600-19.800 29.600-19.800H288c12.900 0 24.600 7.800 29.600 19.800s2.200 25.700-6.900 34.900l-128 128c-12.500 12.500-32.800 12.500-45.300 0z"/></svg>
<div class="t" style="left:1412.8px;top:262.69px;font-size:18.2px;line-height:24px;color:#e8eaed;letter-spacing:0.17px;">Kategorien wählen</div>
<svg class="b" style="left:1618.6px;top:266.4px;" width="16.8" height="16.8" viewBox="0 0 512 512"><path fill="#e8eaed" d="M40 48C26.700 48 16 58.700 16 72v48c0 13.300 10.700 24 24 24H88c13.300 0 24-10.700 24-24V72c0-13.300-10.700-24-24-24H40zM192 64c-17.700 0-32 14.300-32 32s14.300 32 32 32H480c17.700 0 32-14.300 32-32s-14.300-32-32-32H192zm0 160c-17.700 0-32 14.300-32 32s14.300 32 32 32H480c17.700 0 32-14.300 32-32s-14.300-32-32-32H192zm0 160c-17.700 0-32 14.300-32 32s14.300 32 32 32H480c17.700 0 32-14.300 32-32s-14.300-32-32-32H192zM16 232v48c0 13.300 10.700 24 24 24H88c13.300 0 24-10.700 24-24V232c0-13.300-10.700-24-24-24H40c-13.300 0-24 10.700-24 24zM40 368c-13.300 0-24 10.700-24 24v48c0 13.300 10.700 24 24 24H88c13.300 0 24-10.700 24-24V392c0-13.300-10.700-24-24-24H40z"/></svg>
<div class="t" style="left:1643.7px;top:262.69px;font-size:18.2px;line-height:24px;color:#e8eaed;letter-spacing:0.21px;">Kategorien auflisten</div>
<div class="b" style="left:575px;top:332px;width:1255px;height:800px;background:#22252b;border:1px solid #33363c;border-radius:4px;box-sizing:border-box"></div>
<div class="t" style="left:599.6px;top:359.09px;font-size:18.2px;line-height:24px;color:#8fa5b4;letter-spacing:0.28px;">Titel</div>
<div class="b" style="left:599.6px;top:389.4px;width:111.4px;height:37.6px;background:#2d384d;border-radius:4px;"></div>
<div class="t" style="left:608px;top:396.39px;font-size:18.2px;line-height:24px;color:#eceef0;letter-spacing:0.23px;">einsprachig</div>
<div class="b" style="left:717.300px;top:389.400px;width:1087.900px;height:37.600px;background:#1b1d23;border:1px solid #45484e;border-radius:3px;box-sizing:border-box"></div>
<div class="t" style="left:728.3px;top:396.39px;font-size:18.2px;line-height:24px;color:#e3e5e8;letter-spacing:-0.16px;">Kategorie 1.1</div>
<div class="t" style="left:599.6px;top:452.89px;font-size:18.2px;line-height:24px;color:#8fa5b4;letter-spacing:0.1px;">Beschreibung</div>
<div class="b" style="left:599.6px;top:483.3px;width:111.4px;height:35.1px;background:#2d384d;border-radius:4px;"></div>
<div class="t" style="left:608px;top:490.39px;font-size:18.2px;line-height:24px;color:#eceef0;letter-spacing:0.23px;">einsprachig</div>
<div class="b" style="left:599.600px;top:524.500px;width:1205.600px;height:274.300px;background:#1b1d23;border:1px solid #45484e;border-radius:3px;box-sizing:border-box"></div>
<svg class="b" style="left:1789.6px;top:783.6px;" width="14" height="14" viewBox="0 0 14 14"><path d="M13.500 0.500L0.500 13.500M13.500 4.500L4.500 13.500M13.500 8.500L8.500 13.500" stroke="#787b80" stroke-width="0.900"/></svg>
<div class="b" style="left:604.100px;top:828.1px;width:17px;height:17px;background:#2b2a33;border:2px solid #9696a6;border-radius:3px;box-sizing:border-box"></div>
<div class="t" style="left:629.5px;top:824.29px;font-size:18.2px;line-height:24px;color:#dfe1e4;letter-spacing:0.14px;">HTML in der Beschreibung verwenden</div>
<div class="b" style="left:604.100px;top:878.6px;width:17px;height:17px;background:#2b2a33;border:2px solid #9696a6;border-radius:3px;box-sizing:border-box"></div>
<div class="t" style="left:629.5px;top:874.79px;font-size:18.2px;line-height:24px;color:#dfe1e4;letter-spacing:0.16px;">Kategorie deaktivieren</div>
<div class="t" style="left:600.3px;top:946.97px;font-size:27.8px;line-height:36px;color:#dcdddf;letter-spacing:0.77px;-webkit-text-stroke:1.350px;">Position</div>
<div class="b" style="left:600px;top:992.6px;width:1205.2px;height:1px;background:#34373d;"></div>
<div class="t" style="left:600px;top:1018.99px;font-size:18.2px;line-height:24px;color:#8fa5b4;letter-spacing:0.23px;">Übergeordnete Kategorie</div>
<div class="b" style="left:599.700px;top:1049.300px;width:171.400px;height:38px;background:#1b1d23;border:1px solid #45484e;border-radius:3px;box-sizing:border-box"></div>
<div class="t" style="left:610.2px;top:1056.69px;font-size:18.2px;line-height:24px;color:#e3e5e8;letter-spacing:-0.02px;">Test Kategorie 1</div>
<svg class="b" style="left:756.4px;top:1064.8px;" width="10" height="8" viewBox="-5 -4 10 8"><path d="M-3 -1.500L0 1.500L3 -1.500" fill="none" stroke="#d0d3d6" stroke-width="1.300" stroke-linecap="round" stroke-linejoin="round"/></svg>
</div></div>
<div id="rim"></div>
</body></html>
